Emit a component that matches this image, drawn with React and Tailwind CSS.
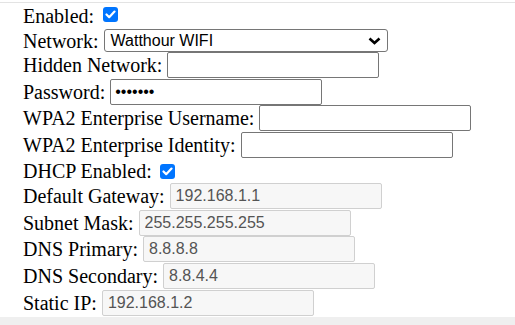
import React from 'react';

// Label + field rows of the network settings form
const labelCls = "font-['Liberation_Serif',serif] text-[20px] leading-[22px] text-black whitespace-nowrap";
const inputCls = "h-[26px] w-[212px] rounded-[2px] border border-[#767676] bg-white px-[4px] font-['Liberation_Sans',Arial,sans-serif] text-[16px] text-black outline-none";
const readOnlyCls = "h-[26px] w-[212px] rounded-[2px] border border-[#d0d0d0] bg-[#f7f7f7] px-[5px] font-['Liberation_Sans',Arial,sans-serif] text-[16px] text-[#545454] outline-none";

const Check = ({ className }) => (
  <span className={`flex h-[15px] w-[15px] items-center justify-center rounded-[3px] bg-[#0075ff] ${className}`}>
    <svg width="11" height="9" viewBox="0 0 11 9">
      <path d="M1.5 4.5 L4.2 7.2 L9.5 1.6" fill="none" stroke="white" strokeWidth="2.2" strokeLinecap="round" strokeLinejoin="round" />
    </svg>
  </span>
);

const TextRow = ({ label, value, type = 'text', readOnly = false, h = 'h-[26.5px]' }) => (
  <div className={`flex items-center gap-[5px] ${h}`}>
    <span className={labelCls}>{label}</span>
    <input
      type={type}
      readOnly
      value={value}
      className={readOnly ? readOnlyCls : inputCls}
    />
  </div>
);

const App = () => {
  return (
    <div className="bg-white">
      <div className="h-[2px]" />
      <div className="h-px bg-[#e3e3e3]" />

      <div className="pl-[23px]">
        {/* Enabled */}
        <div className="flex h-[26px] items-center">
          <span className={labelCls}>Enabled:</span>
          <Check className="mb-[3px] ml-[9px]" />
        </div>

        {/* Network select */}
        <div className="flex h-[23px] items-center gap-[5px]">
          <span className={labelCls}>Network:</span>
          <div className="relative flex h-[23px] w-[284px] items-center rounded-[3px] border border-[#767676] bg-white pl-[6px] font-['Liberation_Sans',Arial,sans-serif] text-[16px] text-black">
            Watthour WIFI
            <svg className="absolute right-[6px] top-[7px]" width="13" height="8" viewBox="0 0 13 8">
              <path d="M1.5 1.5 L6.5 6 L11.5 1.5" fill="none" stroke="black" strokeWidth="2.6" />
            </svg>
          </div>
        </div>

        <TextRow label="Hidden Network:" value="" />
        <TextRow label="Password:" value="1234567" type="password" />
        <TextRow label="WPA2 Enterprise Username:" value="" />
        <TextRow label="WPA2 Enterprise Identity:" value="" />

        {/* DHCP */}
        <div className="flex h-[25px] items-center">
          <span className={labelCls}>DHCP Enabled:</span>
          <Check className="ml-[8px] mt-[1px]" />
        </div>

        <TextRow label="Default Gateway:" value="192.168.1.1" readOnly h="h-[26.6px]" />
        <TextRow label="Subnet Mask:" value="255.255.255.255" readOnly h="h-[26.6px]" />
        <TextRow label="DNS Primary:" value="8.8.8.8" readOnly h="h-[26.6px]" />
        <TextRow label="DNS Secondary:" value="8.8.4.4" readOnly h="h-[26.6px]" />
        <TextRow label="Static IP:" value="192.168.1.2" readOnly h="h-[26.6px]" />
      </div>

      <div className="h-px" />
      <div className="h-[12px] bg-[#efefef]" />
    </div>
  );
};

export default App;
